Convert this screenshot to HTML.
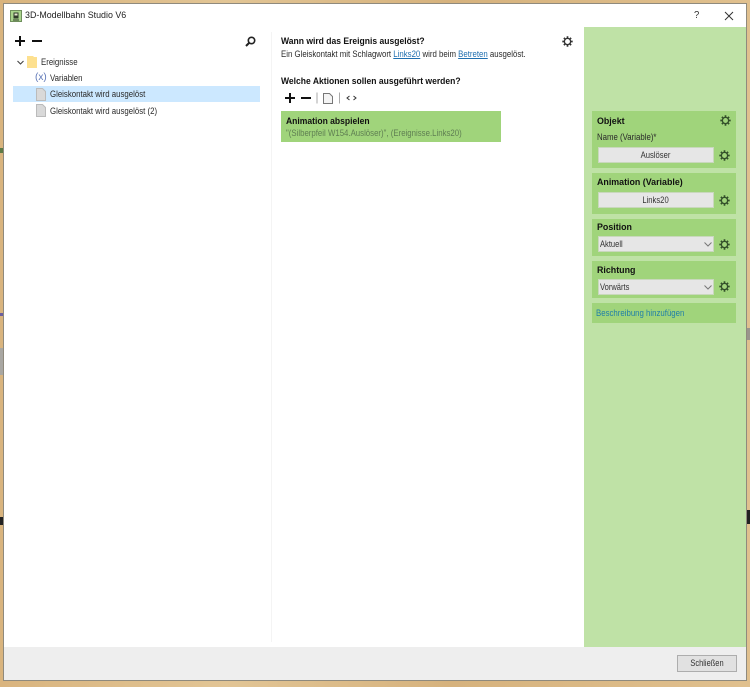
<!DOCTYPE html>
<html lang="de"><head><meta charset="utf-8"><title>3D-Modellbahn Studio V6</title>
<style>
html,body{margin:0;padding:0;width:750px;height:687px;overflow:hidden;background:#d8b37c}
body{font-family:"Liberation Sans",sans-serif;font-size:9px;color:#2a2a2a}
#w{position:absolute;left:0;top:0;width:750px;height:687px;overflow:hidden;filter:blur(.3px)}
.bg{position:absolute;inset:0;background:linear-gradient(90deg,#d9b47e,#e2c595 30%,#d6b27d 60%,#e0c08e 100%)}
.win{position:absolute;left:4px;top:4px;width:742px;height:676px;background:#fff;box-shadow:0 0 0 1px #8f8a7d}
.a{position:absolute;white-space:nowrap;line-height:12px;transform:scaleX(.87);transform-origin:left center}
.b{font-weight:bold;color:#111;transform:scaleX(.95)}
.p{transform:scaleX(.985)}
.box{position:absolute;background:#a0d47b;left:592px;width:144px}
.btn{position:absolute;left:598px;width:116px;height:16px;background:#e6e6e6;border:1px solid #c9d8bd;box-sizing:border-box;text-align:center;line-height:15px;color:#333}
.btn span{display:inline-block;transform:scaleX(.85)}
.sel{position:absolute;left:598px;width:116px;height:16px;background:#e6e6e6;border:1px solid #c9d8bd;box-sizing:border-box;line-height:14px;padding-left:1px;color:#333}
.sel span{display:inline-block;transform:scaleX(.84);transform-origin:left center}
.e{position:absolute}
svg{position:absolute;overflow:visible}
a{color:#1f6fb0;text-decoration:underline}
</style></head><body>
<svg width="0" height="0" style="position:absolute"><defs>
<g id="gear" fill="none" stroke="#333"><circle cx="5.5" cy="5.500" r="3.100" stroke-width="1.300"/><path stroke-width="1.700" d="M5.500 .300v2M5.500 8.700v2M.300 5.500h2M8.700 5.500h2M1.900 1.900l1.400 1.400M7.700 7.700l1.400 1.400M9.100 1.900L7.700 3.300M3.300 7.700L1.900 9.100"/></g>
<g id="gearg" fill="none" stroke="#33502a"><circle cx="5.500" cy="5.500" r="3.100" stroke-width="1.300"/><path stroke-width="1.700" d="M5.500 .300v2M5.500 8.700v2M.300 5.500h2M8.700 5.500h2M1.900 1.900l1.400 1.400M7.700 7.700l1.400 1.400M9.100 1.900L7.700 3.300M3.300 7.700L1.900 9.100"/></g>
<g id="doc"><path d="M.5.5h6l3 3v9h-9z" fill="#d9d9d9" stroke="#bbb"/></g>
</defs></svg>
<div id="w">
<div class="bg"></div>
<div class="e" style="left:0;top:148px;width:3px;height:5px;background:#5d7a45"></div>
<div class="e" style="left:0;top:313px;width:3px;height:3px;background:#6a5fa0"></div>
<div class="e" style="left:0;top:348px;width:3px;height:27px;background:#a9a7a2"></div>
<div class="e" style="left:0;top:517px;width:3px;height:8px;background:#222"></div>
<div class="e" style="left:747px;top:328px;width:3px;height:12px;background:#9a958c"></div>
<div class="e" style="left:747px;top:510px;width:3px;height:14px;background:#222"></div>
<div class="win"></div>

<!-- title bar -->
<svg style="left:10px;top:10px" width="12" height="12"><rect x=".5" y=".5" width="11" height="11" fill="#a9d48c" stroke="#6f8f5c"/><rect x="3.500" y="2.500" width="5" height="6" fill="#2f3a2a"/><rect x="4.500" y="3.500" width="3" height="2" fill="#e8e8d0"/><path d="M3 10h6" stroke="#2f3a2a"/></svg>
<div class="a" style="left:25px;top:10px;font-size:9.500px;color:#222;transform:scaleX(.935)">3D-Modellbahn Studio V6</div>
<div class="a b" style="left:694px;top:10px;font-size:10px;color:#333;font-weight:normal">?</div>
<svg style="left:724px;top:11px" width="10" height="10"><path d="M1 1l8 8M9 1l-8 8" stroke="#333" stroke-width="1"/></svg>

<!-- left tree -->
<svg style="left:15px;top:36px" width="30" height="10"><path d="M5 0v10M0 5h10M33 5M17 5h10" stroke="#111" stroke-width="2"/></svg>
<svg style="left:245px;top:36px" width="11" height="11"><circle cx="6.500" cy="4.500" r="3.200" fill="none" stroke="#222" stroke-width="1.600"/><path d="M4 7L1 10" stroke="#222" stroke-width="2"/></svg>
<svg style="left:17px;top:60px" width="8" height="6"><path d="M.5 1l3 3 3-3" fill="none" stroke="#444" stroke-width="1.100"/></svg>
<svg style="left:27px;top:56px" width="10" height="12"><path d="M0 0h6l1 1h3v11H0z" fill="#fde08f"/></svg>
<div class="a" style="left:41px;top:56px">Ereignisse</div>
<div class="a" style="left:35px;top:72px;font-size:10px;color:#5f78b8;transform:none">(x)</div>
<div class="a" style="left:50px;top:72px">Variablen</div>
<div class="e" style="left:13px;top:86px;width:247px;height:16px;background:#cce8ff"></div>
<svg style="left:36px;top:88px" width="10" height="13"><use href="#doc"/></svg>
<div class="a" style="left:50px;top:88px">Gleiskontakt wird ausgelöst</div>
<svg style="left:36px;top:104px" width="10" height="13"><use href="#doc"/></svg>
<div class="a" style="left:50px;top:105px">Gleiskontakt wird ausgelöst (2)</div>
<div class="e" style="left:271px;top:32px;width:1px;height:610px;background:#f4f4f4"></div>

<!-- middle -->
<div class="a b" style="left:281px;top:35px">Wann wird das Ereignis ausgelöst?</div>
<div class="a" style="left:281px;top:48px">Ein Gleiskontakt mit Schlagwort <a>Links20</a> wird beim <a>Betreten</a> ausgelöst.</div>
<svg style="left:562px;top:36px" width="11" height="11"><use href="#gear"/></svg>
<div class="a b" style="left:281px;top:75px">Welche Aktionen sollen ausgeführt werden?</div>
<svg style="left:285px;top:92px" width="80" height="12"><path d="M5 1v10M0 6h10M16 6h10" stroke="#111" stroke-width="2"/><path d="M32 .5v11M54.500 .5v11" stroke="#aaa"/><path d="M38.500 1.500h6l3 3v7h-9z" fill="#f4f4f4" stroke="#777"/><path d="M64.500 4l-2.500 2 2.500 2M68.500 4l2.500 2-2.500 2" fill="none" stroke="#333"/></svg>
<div class="e" style="left:281px;top:111px;width:220px;height:31px;background:#a0d47b"></div>
<div class="a b" style="left:286px;top:115px">Animation abspielen</div>
<div class="a" style="left:286px;top:127px;color:#5f7f52">"(Silberpfeil W154.Auslöser)", (Ereignisse.Links20)</div>

<!-- right panel -->
<div class="e" style="left:584px;top:27px;width:162px;height:620px;background:#bfe2a6"></div>
<div class="box" style="top:111px;height:57px"></div>
<div class="a b p" style="left:597px;top:115px">Objekt</div>
<svg style="left:720px;top:115px" width="11" height="11"><use href="#gearg"/></svg>
<div class="a" style="left:597px;top:131px">Name (Variable)*</div>
<div class="btn" style="top:147px"><span>Auslöser</span></div>
<svg style="left:719px;top:150px" width="11" height="11"><use href="#gearg"/></svg>

<div class="box" style="top:173px;height:41px"></div>
<div class="a b p" style="left:597px;top:176px">Animation (Variable)</div>
<div class="btn" style="top:192px"><span>Links20</span></div>
<svg style="left:719px;top:195px" width="11" height="11"><use href="#gearg"/></svg>

<div class="box" style="top:219px;height:37px"></div>
<div class="a b p" style="left:597px;top:221px">Position</div>
<div class="sel" style="top:236px"><span>Aktuell</span></div>
<svg style="left:704px;top:242px" width="8" height="5"><path d="M.5.5l3.500 3.500L7.500.5" fill="none" stroke="#777"/></svg>
<svg style="left:719px;top:239px" width="11" height="11"><use href="#gearg"/></svg>

<div class="box" style="top:261px;height:37px"></div>
<div class="a b p" style="left:597px;top:264px">Richtung</div>
<div class="sel" style="top:279px"><span>Vorwärts</span></div>
<svg style="left:704px;top:285px" width="8" height="5"><path d="M.5.5l3.500 3.500L7.500.5" fill="none" stroke="#777"/></svg>
<svg style="left:719px;top:281px" width="11" height="11"><use href="#gearg"/></svg>

<div class="box" style="top:303px;height:20px"></div>
<div class="a" style="left:596px;top:307px;color:#1f7fa8">Beschreibung hinzufügen</div>

<!-- footer -->
<div class="e" style="left:4px;top:647px;width:742px;height:33px;background:#eeeeee"></div>
<div class="e" style="left:677px;top:655px;width:60px;height:17px;background:#e1e1e1;border:1px solid #adadad;box-sizing:border-box;text-align:center;line-height:15px;color:#333"><span style="display:inline-block;transform:scaleX(.83)">Schließen</span></div>
</div>
</body></html>
